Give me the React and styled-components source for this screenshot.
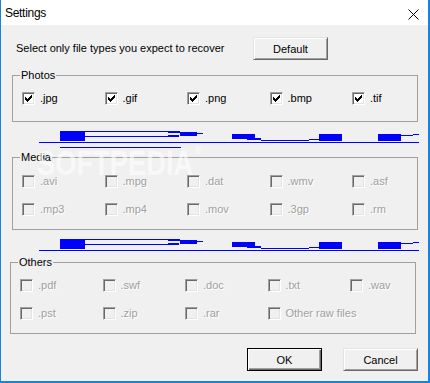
import React from "react";
import styled, { createGlobalStyle } from "styled-components";

const Global = createGlobalStyle`
  html, body { margin: 0; padding: 0; background: #f0f0f0; }
  * { box-sizing: border-box; }
`;

const Window = styled.div`
  position: relative;
  width: 430px;
  height: 383px;
  background: #f0f0f0;
  border-left: 1px solid #1883d7;
  border-right: 2px solid #1883d7;
  border-bottom: 2px solid #1883d7;
  font-family: "Liberation Sans", Arial, sans-serif;
  font-size: 11px;
  color: #000;
  overflow: hidden;
`;

const TitleBar = styled.div`
  height: 25px;
  background: #fff;
  display: flex;
  align-items: flex-start;
  padding: 0 9px 0 4px;
`;

const Title = styled.div`
  align-self: center;
  font-family: "Liberation Sans", Arial, sans-serif;
  font-size: 12px;
  letter-spacing: -0.3px;
  line-height: 16px;
  flex: 1;
`;

const CloseIcon = styled.svg`
  margin-top: 9px;
  display: block;
`;

const Content = styled.div`
  display: flex;
  flex-direction: column;
  padding: 12px 10px 0 11px;
`;

const DescRow = styled.div`
  display: grid;
  grid-template-columns: 241px 75px;
  align-items: center;
  height: 23px;
`;

const DescText = styled.div`
  padding-left: 4px;
  line-height: 13px;
`;

const Button = styled.button`
  width: 75px;
  height: 23px;
  padding: 0;
  font-family: "Liberation Sans", Arial, sans-serif;
  font-size: 11px;
  color: #000;
  background: #f0f0f0;
  border: 1px solid;
  border-color: ${(p) => (p.$default ? "#000" : "#e3e3e3 #696969 #696969 #e3e3e3")};
  box-shadow: ${(p) =>
    p.$default
      ? "inset 1px 1px 0 #fff, inset -1px -1px 0 #696969, inset -2px -2px 0 #a0a0a0"
      : "inset 1px 1px 0 #fff, inset -1px -1px 0 #a0a0a0"};
`;

const Group = styled.div`
  position: relative;
  border: 1px solid #a0a0a0;
  padding: ${(p) => p.$pt}px 0 ${(p) => p.$pb}px 9px;
  margin-left: ${(p) => p.$shift || 0}px;
  width: 406px;
  margin-top: ${(p) => p.$mt || 0}px;
`;

const Caption = styled.div`
  position: absolute;
  top: -7px;
  left: 7px;
  padding: 0 1px;
  line-height: 13px;
  background: #f0f0f0;
  color: #000;
`;

const Grid = styled.div`
  display: grid;
  grid-template-columns: repeat(5, 82.5px);
  row-gap: 15px;
`;

const Item = styled.div`
  display: flex;
  align-items: center;
  gap: 5px;
  height: 13px;
  white-space: nowrap;
`;

const Box = styled.span`
  position: relative;
  width: 13px;
  height: 13px;
  flex: none;
  border: 1px solid;
  border-color: #a0a0a0 #fff #fff #a0a0a0;
  box-shadow: inset 1px 1px 0 #696969, inset -1px -1px 0 #e3e3e3;
  background: ${(p) => (p.$disabled ? "#f0f0f0" : "#fff")};
`;

const Check = styled.svg`
  position: absolute;
  left: 2px;
  top: 2px;
  display: block;
`;

const ItemLabel = styled.span`
  line-height: 13px;
  color: ${(p) => (p.$disabled ? "#a0a0a0" : "#000")};
  text-shadow: ${(p) => (p.$disabled ? "1px 1px 0 #fff" : "none")};
`;

const Glitch = styled.svg`
  display: block;
  overflow: visible;
  flex: none;
`;

const ButtonRow = styled.div`
  display: flex;
  justify-content: flex-end;
  gap: 21px;
  margin-top: 14px;
`;

const Watermark = styled.div`
  position: absolute;
  left: 36px;
  top: 145px;
  font-family: "Liberation Sans", Arial, sans-serif;
  font-weight: bold;
  font-size: 35px;
  line-height: 1;
  color: rgba(255, 255, 255, 0.6);
  transform: scaleX(0.78);
  transform-origin: left top;
  pointer-events: none;
  letter-spacing: 0px;
`;

const Reg = styled.span`
  font-size: 11px;
  vertical-align: top;
  margin-left: 2px;
`;

const CheckMark = () => (
  <Check width="7" height="7" viewBox="0 0 7 7" shapeRendering="crispEdges">
    <rect x="0" y="2" width="1" height="3" fill="#000" />
    <rect x="1" y="3" width="1" height="3" fill="#000" />
    <rect x="2" y="4" width="1" height="3" fill="#000" />
    <rect x="3" y="3" width="1" height="3" fill="#000" />
    <rect x="4" y="2" width="1" height="3" fill="#000" />
    <rect x="5" y="1" width="1" height="3" fill="#000" />
    <rect x="6" y="0" width="1" height="3" fill="#000" />
  </Check>
);

const CheckItem = ({ label, checked, disabled }) => (
  <Item>
    <Box $disabled={disabled}>{checked && <CheckMark />}</Box>
    <ItemLabel $disabled={disabled}>{label}</ItemLabel>
  </Item>
);

const glitchRects = [
  [48, 9, 25, 10],
  [73, 9, 83, 1],
  [156, 9, 12, 2],
  [156, 13, 11, 2],
  [168, 10, 17, 4],
  [185, 11, 6, 1],
  [73, 14, 93, 1],
  [27, 20, 380, 1],
  [220, 12, 23, 5],
  [235, 16, 14, 2],
  [249, 18, 48, 1],
  [297, 17, 11, 1],
  [307, 12, 23, 7],
  [366, 12, 23, 7],
  [389, 13, 12, 1],
  [401, 12, 6, 1],
];

const GlitchLines = ({ height, extra }) => (
  <Glitch width="406" height={height} shapeRendering="crispEdges">
    {glitchRects.map(([x, y, w, h], i) => (
      <rect key={i} x={x} y={y} width={w} height={h} fill="#0000ff" />
    ))}
    {extra && <rect x="48" y="25" width="121" height="1" fill="#0000ff" />}
  </Glitch>
);

const photos = [".jpg", ".gif", ".png", ".bmp", ".tif"];
const media = [".avi", ".mpg", ".dat", ".wmv", ".asf", ".mp3", ".mp4", ".mov", ".3gp", ".rm"];
const others = [".pdf", ".swf", ".doc", ".txt", ".wav", ".pst", ".zip", ".rar", "Other raw files"];

export default function App() {
  return (
    <>
      <Global />
      <Window>
        <TitleBar>
          <Title>Settings</Title>
          <CloseIcon width="11" height="11" viewBox="0 0 11 11">
            <path d="M0.5 0.5 L10.5 10.5 M10.5 0.5 L0.5 10.5" stroke="#000" strokeWidth="1" fill="none" />
          </CloseIcon>
        </TitleBar>
        <Content>
          <DescRow>
            <DescText>Select only file types you expect to recover</DescText>
            <Button>Default</Button>
          </DescRow>
          <Group $pt={16} $pb={16} $mt={15}>
            <Caption>Photos</Caption>
            <Grid>
              {photos.map((l) => (
                <CheckItem key={l} label={l} checked />
              ))}
            </Grid>
          </Group>
          <GlitchLines height={35} extra />
          <Group $pt={17} $pb={13}>
            <Caption>Media</Caption>
            <Grid>
              {media.map((l) => (
                <CheckItem key={l} label={l} disabled />
              ))}
            </Grid>
          </Group>
          <GlitchLines height={32} />
          <Group $pt={16} $pb={13} $shift={-2}>
            <Caption>Others</Caption>
            <Grid>
              {others.map((l) => (
                <CheckItem key={l} label={l} disabled />
              ))}
            </Grid>
          </Group>
          <ButtonRow>
            <Button $default>OK</Button>
            <Button>Cancel</Button>
          </ButtonRow>
        </Content>
        <Watermark>
          SOFTPEDIA<Reg>®</Reg>
        </Watermark>
      </Window>
    </>
  );
}
